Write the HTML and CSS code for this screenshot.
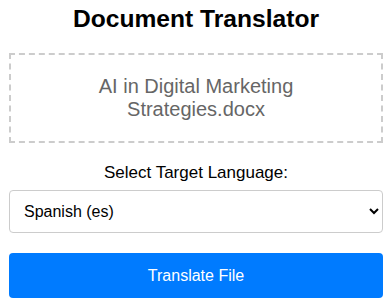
FILE: index.html
```html
<!DOCTYPE html>
<html>
<head>
<meta charset="utf-8">
<link rel="stylesheet" href="styles.css">
</head>
<body>
<div class="app">
  <h1 class="title">Document Translator</h1>
  <div class="drop">AI in Digital Marketing Strategies.docx</div>
  <label class="label" for="lang">Select Target Language:</label>
  <select id="lang" class="select">
    <option>Spanish (es)</option>
  </select>
  <button class="btn">Translate File</button>
</div>
</body>
</html>
```
FILE: styles.css
```css
html, body {
  margin: 0;
  padding: 0;
  background: #fff;
}
body {
  font-family: "Liberation Sans", Arial, sans-serif;
  color: #000;
}
.app {
  padding: 5px 9px 0 9px;
  display: flex;
  flex-direction: column;
}
.title {
  font-size: 24.6px;
  font-weight: bold;
  text-align: center;
  margin: 0 0 20px 0;
  line-height: 28px;
}
.drop {
  border: 2px dashed #ccc;
  padding: 20px 40px;
  font-size: 20px;
  line-height: 23px;
  color: #666;
  text-align: center;
}
.label {
  margin-top: 20px;
  font-size: 17px;
  text-align: center;
  line-height: 20px;
}
.select {
  margin-top: 7px;
  height: 43px;
  padding: 0 10px;
  font-family: "Liberation Sans", Arial, sans-serif;
  font-size: 16px;
  border: 1px solid #ccc;
  border-radius: 4px;
  background: #fff;
  color: #000;
}
.btn {
  margin-top: 20px;
  height: 45px;
  border: none;
  border-radius: 4px;
  background: #007bff;
  color: #fff;
  font-family: "Liberation Sans", Arial, sans-serif;
  font-size: 16px;
}
```
